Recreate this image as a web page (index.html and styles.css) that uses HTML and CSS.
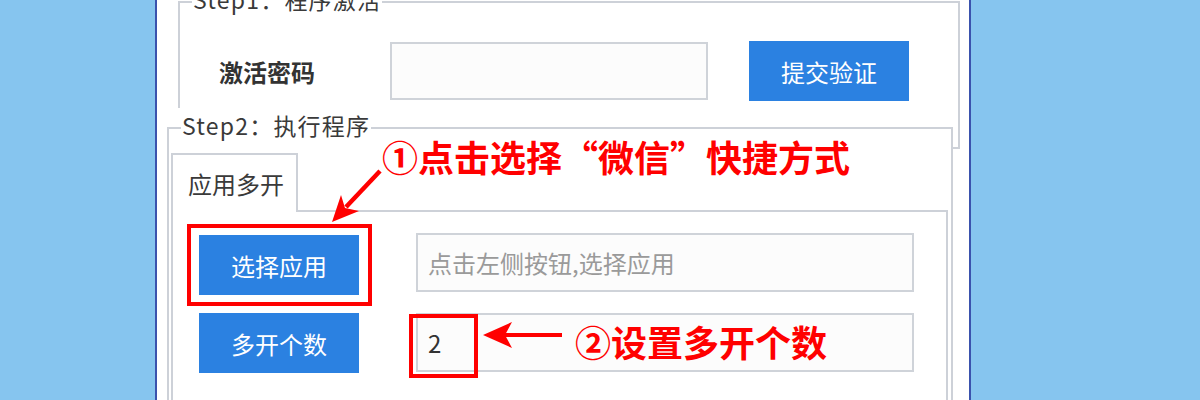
FILE: index.html
```html
<!DOCTYPE html>
<html lang="zh-CN">
<head>
  <meta charset="UTF-8">
  <title>应用多开</title>
  <link rel="stylesheet" href="styles.css">
</head>
<body>

  <div class="screen">
    <div class="window">

      <!-- Step1 -->
      <div class="group step1">
        <span class="group-title">Step1：程序激活</span>
        <div class="form-row">
          <label class="field-label">激活密码</label>
          <input class="text-input code-input" type="text">
          <button class="btn btn-submit">提交验证</button>
        </div>
      </div>

      <!-- Step2 -->
      <div class="group-host">
        <div class="group step2">
          <span class="group-title">Step2：执行程序</span>
          <div class="tabs">
            <div class="tab-head">应用多开</div>
            <div class="tab-panel">
              <div class="app-row">
                <div class="mark-wrap">
                  <button class="btn">选择应用</button>
                  <span class="mark mark-btn"></span>
                </div>
                <input class="text-input wide first" type="text" placeholder="点击左侧按钮,选择应用">
              </div>
              <div class="app-row">
                <button class="btn">多开个数</button>
                <div class="mark-wrap gap">
                  <input class="text-input wide" type="text" value="2">
                  <span class="mark mark-count"></span>
                </div>
              </div>
            </div>
          </div>
        </div>
      </div>

    </div>

    <div class="note note-1">①点击选择“微信”快捷方式</div>
    <div class="note note-2">②设置多开个数</div>

    <svg class="arrows" width="1200" height="400" viewBox="0 0 1200 400">
      <line x1="380" y1="171" x2="346" y2="207" stroke="#ff0000" stroke-width="4.5"/>
      <polygon points="332,222 341,195 345,208 359,211" fill="#ff0000"/>
      <line x1="505" y1="335" x2="562" y2="335" stroke="#ff0000" stroke-width="4"/>
      <polygon points="483,335 512,322 505,335 512,348" fill="#ff0000"/>
    </svg>
  </div>

</body>
</html>
```

FILE: styles.css
```css
* {
  box-sizing: border-box;
  margin: 0;
  padding: 0;
}

body {
  width: 1200px;
  height: 400px;
  overflow: hidden;
  background: #86c5ef;
  font-family: "Noto Sans CJK SC", "Noto Sans", sans-serif;
  color: #333;
}

.screen {
  position: relative;
  height: 400px;
  padding-left: 155px;
}

.window {
  width: 816px;
  height: 400px;
  background: #ffffff;
  border-left: 2px solid #3a52ad;
  border-right: 2px solid #3a52ad;
  overflow: hidden;
}

/* group boxes */
.group {
  position: relative;
  border: 2px solid #cdd1d8;
}

.group-title {
  position: absolute;
  top: -17px;
  left: 12px;
  padding: 0 1px 0 1px;
  background: #ffffff;
  font-size: 23px;
  line-height: 26px;
  color: #3a3a3a;
  white-space: nowrap;
  letter-spacing: 1.2px;
}

.step1 {
  margin: 1px 0 0 21px;
  width: 782px;
  height: 148px;
}

.form-row {
  display: flex;
  align-items: center;
  padding: 38px 0 0 39px;
}

.field-label {
  width: 171px;
  font-size: 24px;
  font-weight: bold;
  color: #333;
}

.text-input {
  height: 58px;
  border: 2px solid #cfd3d9;
  background: #fcfcfc;
  font-family: inherit;
  font-size: 24px;
  color: #333;
  padding-left: 10px;
  outline: none;
}

.text-input::placeholder {
  color: #9a9a9a;
  opacity: 1;
}

.code-input {
  width: 318px;
}

.btn {
  width: 160px;
  height: 60px;
  border: none;
  background: #2b81e1;
  color: #ffffff;
  font-family: inherit;
  font-size: 24px;
}

.btn-submit {
  margin-left: 41px;
}

.group-host {
  position: relative;
  margin: -41px 0 0 10px;
  width: 786px;
  padding-top: 19px;
  background: #ffffff;
}

.step2 {
  height: 300px;
  border-bottom: none;
}

/* tab control */
.tabs {
  margin: 24px 0 0 2px;
  width: 777px;
}

.tab-head {
  position: relative;
  z-index: 1;
  display: flex;
  align-items: center;
  width: 127px;
  height: 59px;
  margin-bottom: -2px;
  padding-left: 15px;
  border: 2px solid #cdd1d8;
  border-bottom: none;
  background: #ffffff;
  font-size: 24px;
  color: #3a3a3a;
}

.tab-panel {
  height: 250px;
  border: 2px solid #cdd1d8;
  padding: 23px 0 0 26px;
}

.app-row {
  display: flex;
  align-items: flex-start;
}

.app-row + .app-row {
  margin-top: 18px;
}

.wide {
  width: 498px;
  height: 59px;
}

.wide.first {
  margin: -2px 0 0 57px;
}

.mark-wrap {
  position: relative;
}

.mark-wrap.gap {
  margin-left: 57px;
}

.mark {
  position: absolute;
  border: 4px solid #ff0000;
}

.mark-btn {
  left: -12px;
  top: -11px;
  width: 185px;
  height: 82px;
}

.mark-count {
  left: -7px;
  top: 1px;
  width: 69px;
  height: 64px;
}

/* annotations */
.note {
  position: absolute;
  color: #ff0000;
  font-size: 36px;
  font-weight: bold;
  line-height: 36px;
  white-space: nowrap;
}

.note-1 {
  left: 382px;
  top: 138px;
}

.note-2 {
  left: 575px;
  top: 323px;
}

.arrows {
  position: absolute;
  left: 0;
  top: 0;
  pointer-events: none;
}
```
